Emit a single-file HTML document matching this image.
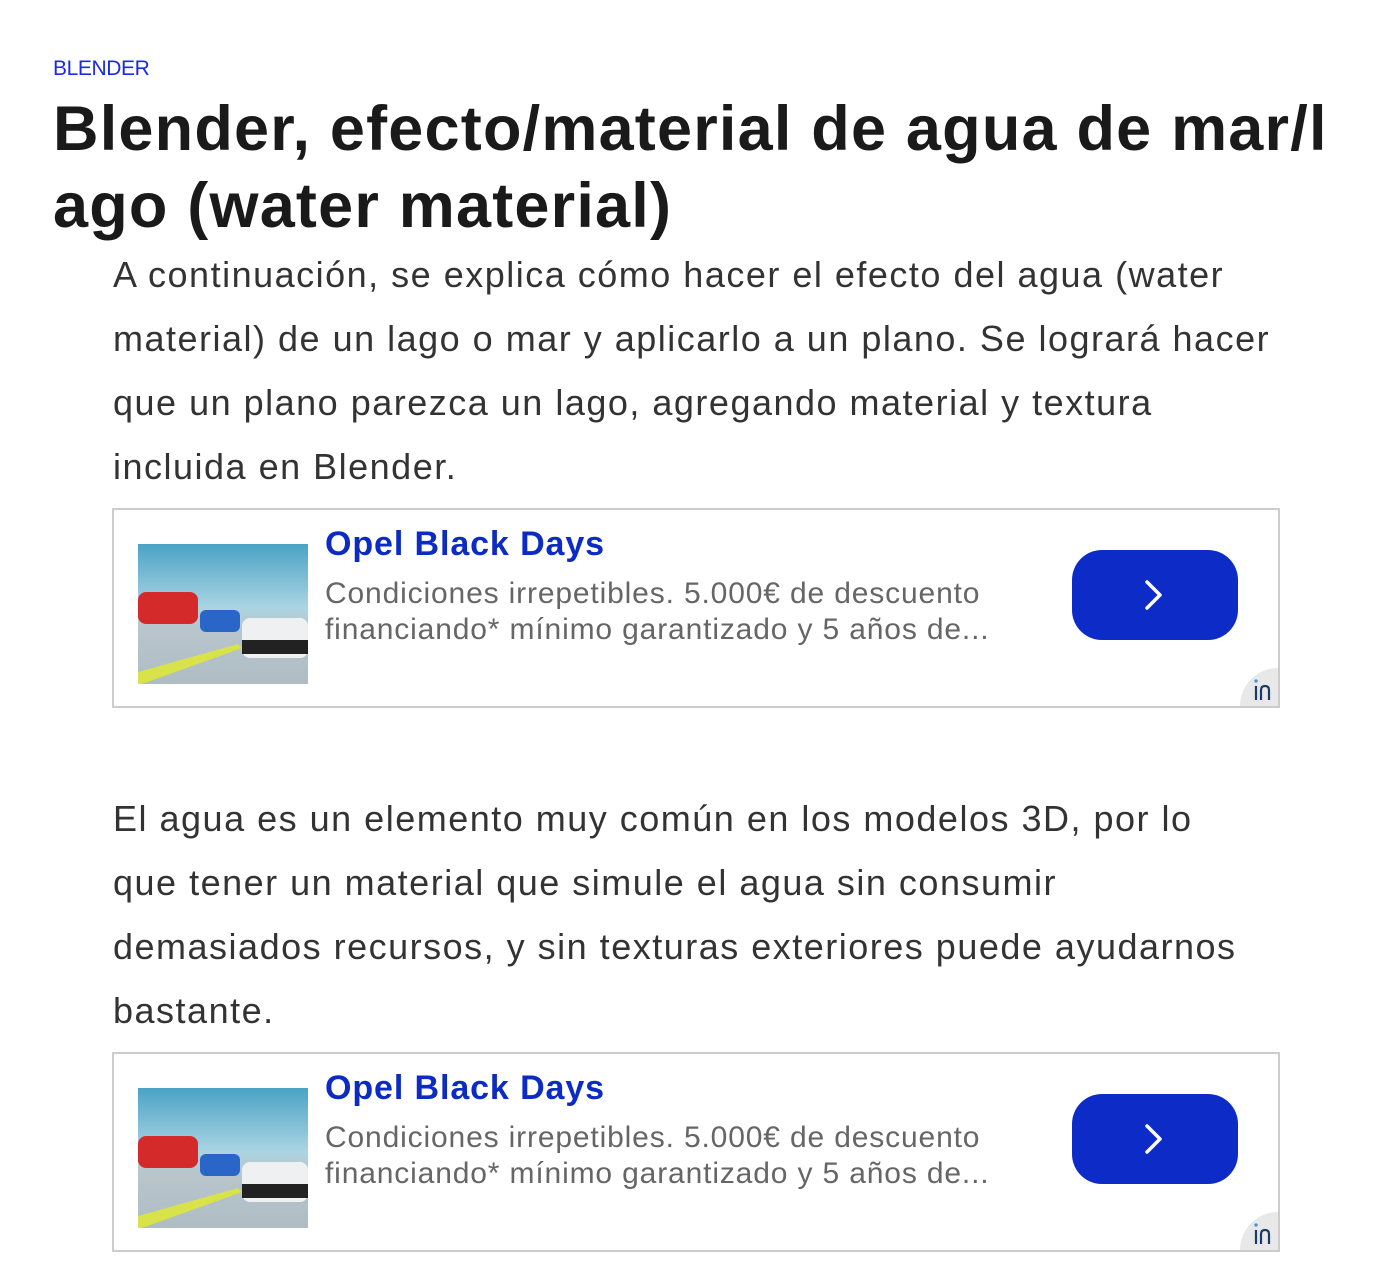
<!DOCTYPE html>
<html><head><meta charset="utf-8"><style>
*{margin:0;padding:0;box-sizing:border-box}
body{width:1392px;height:1276px;background:#fff;position:relative;overflow:hidden;font-family:"Liberation Sans",Arial,sans-serif}
.cat{position:absolute;left:53px;top:57px;font-size:21px;color:#1a2be6;letter-spacing:-0.4px}
.title{position:absolute;left:53px;top:91px;font-size:63px;font-weight:bold;color:#1a1a1a;line-height:77px;letter-spacing:1.2px;white-space:nowrap}
.p{position:absolute;left:113px;font-size:36px;color:#333;line-height:64px;white-space:nowrap;letter-spacing:1.5px}
.ad{position:absolute;left:112px;width:1168px;height:200px;border:2px solid #ccc;background:#fff}
.img{position:absolute;left:24px;top:34px;width:170px;height:140px;overflow:hidden;background:linear-gradient(180deg,#4aa3c6 0%,#a9d4e2 45%,#b9c6cc 60%,#aebcc4 100%)}
.at{position:absolute;left:211px;top:15px;font-size:34px;font-weight:bold;color:#0c2bc4;letter-spacing:0.9px}
.ad p{position:absolute;left:211px;top:66px;font-size:30px;color:#666;line-height:36px;letter-spacing:0.85px;white-space:nowrap}
.btn{position:absolute;left:958px;top:40px;width:166px;height:90px;border-radius:30px;background:#0d2bc6}
.badge{position:absolute;right:0;bottom:0;width:38px;height:38px;background:#e8e8e8;border-top-left-radius:38px}
</style></head><body>
<div class="cat">BLENDER</div>
<div class="title">Blender, efecto/material de agua de mar/l<br>ago (water material)</div>
<div class="p" style="top:243px">A continuación, se explica cómo hacer el efecto del agua (water<br>material) de un lago o mar y aplicarlo a un plano. Se logrará hacer<br>que un plano parezca un lago, agregando material y textura<br>incluida en Blender.</div>

<div class="ad" style="top:508px">
<div class="img"><svg width="170" height="140" viewBox="0 0 170 140"><path d="M0 140 L0 128 L100 100 L104 104 L4 140Z" fill="#d8e34a"/><rect x="0" y="48" width="60" height="32" rx="8" fill="#d42a2a"/><rect x="62" y="66" width="40" height="22" rx="6" fill="#2a66c8"/><rect x="104" y="74" width="66" height="40" rx="8" fill="#eef0f2"/><rect x="104" y="96" width="66" height="14" fill="#222"/></svg></div>
<div class="at">Opel Black Days</div>
<p>Condiciones irrepetibles. 5.000€ de descuento<br>financiando* mínimo garantizado y 5 años de...</p>
<div class="btn"><svg width="166" height="90"><path d="M75 32 L88 45 L75 58" stroke="#fff" stroke-width="3.5" fill="none" stroke-linecap="round" stroke-linejoin="round"/></svg></div>
<div class="badge"><svg width="38" height="38"><circle cx="16" cy="13" r="1.6" fill="#3b8de0"/><path d="M16 18 V32 M21 32 V22 Q21 18 25 18 Q29 18 29 22 V32" stroke="#1b3a66" stroke-width="2.2" fill="none"/></svg></div>
</div>

<div class="p" style="top:787px">El agua es un elemento muy común en los modelos 3D, por lo<br>que tener un material que simule el agua sin consumir<br>demasiados recursos, y sin texturas exteriores puede ayudarnos<br>bastante.</div>

<div class="ad" style="top:1052px">
<div class="img"><svg width="170" height="140" viewBox="0 0 170 140"><path d="M0 140 L0 128 L100 100 L104 104 L4 140Z" fill="#d8e34a"/><rect x="0" y="48" width="60" height="32" rx="8" fill="#d42a2a"/><rect x="62" y="66" width="40" height="22" rx="6" fill="#2a66c8"/><rect x="104" y="74" width="66" height="40" rx="8" fill="#eef0f2"/><rect x="104" y="96" width="66" height="14" fill="#222"/></svg></div>
<div class="at">Opel Black Days</div>
<p>Condiciones irrepetibles. 5.000€ de descuento<br>financiando* mínimo garantizado y 5 años de...</p>
<div class="btn"><svg width="166" height="90"><path d="M75 32 L88 45 L75 58" stroke="#fff" stroke-width="3.5" fill="none" stroke-linecap="round" stroke-linejoin="round"/></svg></div>
<div class="badge"><svg width="38" height="38"><circle cx="16" cy="13" r="1.6" fill="#3b8de0"/><path d="M16 18 V32 M21 32 V22 Q21 18 25 18 Q29 18 29 22 V32" stroke="#1b3a66" stroke-width="2.2" fill="none"/></svg></div>
</div>
</body></html>
